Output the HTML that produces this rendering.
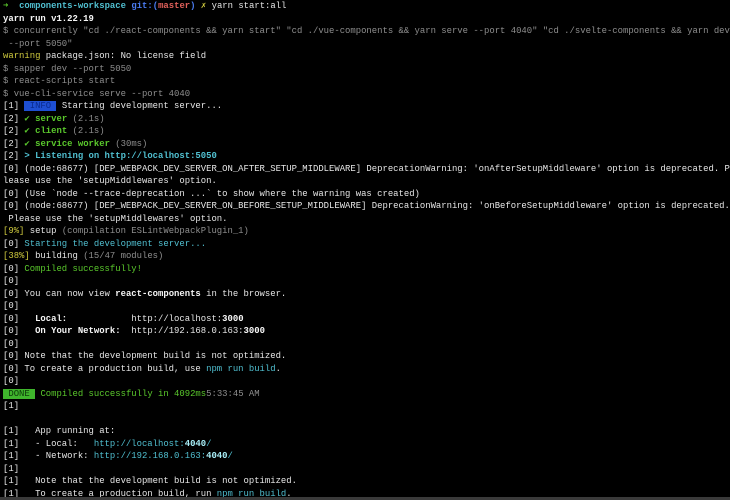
<!DOCTYPE html>
<html><head><meta charset="utf-8"><style>
html,body{margin:0;padding:0;background:#000;width:730px;height:500px;overflow:hidden}
#t{position:absolute;left:3px;top:0;font-family:"Liberation Mono","DejaVu Sans Mono",monospace;font-size:8.92px;color:#e6e6e6}
.l{height:12.5px;line-height:12.5px;white-space:pre}
.g{color:#8e8e8e}.y{color:#d0cb3e}.gr{color:#5ac82c}.c{color:#50bfd0}.b{font-weight:bold;color:#f6f6f6}
.bl{color:#4a7bf0;font-weight:bold}.r{color:#e0605a;font-weight:bold}
.info{background:#1e4fd2;color:#0a2a8e}
.done{background:#3fb52c;color:#0d3a0a}
.cb{color:#50bfd0;font-weight:bold}
#bar{position:absolute;left:0;right:0;top:497px;height:3px;background:#3a3a3a}
</style></head><body><div id="t"><div class="l"><span class="gr">➜</span>  <span class="cb">components-workspace</span> <span class="bl">git:(</span><span class="r">master</span><span class="bl">)</span> <span class="y">✗</span> yarn start:all</div><div class="l"><span class="b">yarn run v1.22.19</span></div><div class="l g">$ concurrently "cd ./react-components &amp;&amp; yarn start" "cd ./vue-components &amp;&amp; yarn serve --port 4040" "cd ./svelte-components &amp;&amp; yarn dev</div><div class="l g"> --port 5050"</div><div class="l"><span class="y">warning</span> package.json: No license field</div><div class="l g">$ sapper dev --port 5050</div><div class="l g">$ react-scripts start</div><div class="l g">$ vue-cli-service serve --port 4040</div><div class="l">[1] <span class="info"> INFO </span> Starting development server...</div><div class="l">[2] <span class="gr">✔ <b>server</b></span> <span class="g">(2.1s)</span></div><div class="l">[2] <span class="gr">✔ <b>client</b></span> <span class="g">(2.1s)</span></div><div class="l">[2] <span class="gr">✔ <b>service worker</b></span> <span class="g">(30ms)</span></div><div class="l">[2] <span class="cb">&gt; Listening on http://localhost:5050</span></div><div class="l">[0] (node:68677) [DEP_WEBPACK_DEV_SERVER_ON_AFTER_SETUP_MIDDLEWARE] DeprecationWarning: 'onAfterSetupMiddleware' option is deprecated. P</div><div class="l">lease use the 'setupMiddlewares' option.</div><div class="l">[0] (Use `node --trace-deprecation ...` to show where the warning was created)</div><div class="l">[0] (node:68677) [DEP_WEBPACK_DEV_SERVER_ON_BEFORE_SETUP_MIDDLEWARE] DeprecationWarning: 'onBeforeSetupMiddleware' option is deprecated.</div><div class="l"> Please use the 'setupMiddlewares' option.</div><div class="l"><span class="y">[9%]</span> setup <span class="g">(compilation ESLintWebpackPlugin_1)</span></div><div class="l">[0] <span class="c">Starting the development server...</span></div><div class="l"><span class="y">[38%]</span> building <span class="g">(15/47 modules)</span></div><div class="l">[0] <span class="gr">Compiled successfully!</span></div><div class="l">[0]</div><div class="l">[0] You can now view <span class="b">react-components</span> in the browser.</div><div class="l">[0]</div><div class="l">[0]   <span class="b">Local:</span>            http://localhost:<span class="b">3000</span></div><div class="l">[0]   <span class="b">On Your Network:</span>  http://192.168.0.163:<span class="b">3000</span></div><div class="l">[0]</div><div class="l">[0] Note that the development build is not optimized.</div><div class="l">[0] To create a production build, use <span class="c">npm run build</span>.</div><div class="l">[0]</div><div class="l"><span class="done"> DONE </span> <span class="gr">Compiled successfully in 4092ms</span><span class="g">5:33:45 AM</span></div><div class="l">[1]</div><div class="l"></div><div class="l">[1]   App running at:</div><div class="l">[1]   - Local:   <span class="c">http://localhost:<b style="color:#a8eef8">4040</b>/</span></div><div class="l">[1]   - Network: <span class="c">http://192.168.0.163:<b style="color:#a8eef8">4040</b>/</span></div><div class="l">[1]</div><div class="l">[1]   Note that the development build is not optimized.</div><div class="l">[1]   To create a production build, run <span class="c">npm run build</span>.</div></div><div id="bar"></div></body></html>
